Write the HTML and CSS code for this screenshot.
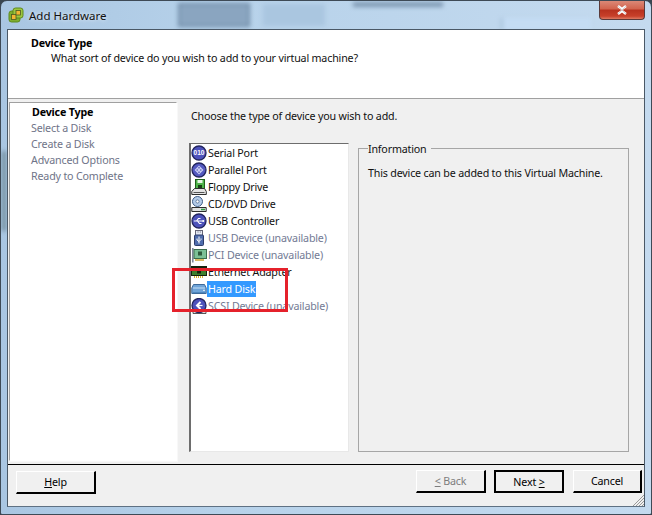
FILE: index.html
```html
<!DOCTYPE html>
<html lang="en">
<head>
<meta charset="utf-8">
<title>Add Hardware</title>
<link rel="stylesheet" href="styles.css">
</head>
<body>
<div class="window">
  <div class="backdrop">
    <span class="blur blur-a"></span>
    <span class="blur blur-b"></span>
    <span class="blur blur-c"></span>
    <span class="blur blur-d"></span>
    <span class="blur blur-e"></span>
  </div>
  <header class="titlebar">
    <svg class="app-icon" viewBox="0 0 16 16" aria-hidden="true">
      <rect x="1" y="4" width="11" height="11" rx="2.5" fill="#7fae2e" stroke="#5d8a1e"/>
      <rect x="5" y="1" width="10" height="10" rx="2.5" fill="#9cc63f" stroke="#5d8a1e"/>
      <rect x="3.5" y="7.5" width="4.5" height="5" fill="#f2b632" stroke="#4b5a22" stroke-width=".8"/>
      <rect x="8" y="3.5" width="4.5" height="4.5" fill="#f2b632" stroke="#4b5a22" stroke-width=".8"/>
    </svg>
    <span class="title">Add Hardware</span>
    <button class="close" aria-label="Close">
      <svg viewBox="0 0 12 10" aria-hidden="true"><path d="M2 1l4 3 4-3M2 9l4-3 4 3" fill="none" stroke="#fff" stroke-width="2.4"/><path d="M2 1l8 8M10 1L2 9" fill="none" stroke="#4b5564" stroke-width=".5" opacity=".5"/></svg>
    </button>
  </header>
  <div class="client">
    <section class="banner">
      <h1>Device Type</h1>
      <p>What sort of device do you wish to add to your virtual machine?</p>
    </section>
    <main class="main">
      <ol class="steps">
        <li class="current">Device Type</li>
        <li>Select a Disk</li>
        <li>Create a Disk</li>
        <li>Advanced Options</li>
        <li>Ready to Complete</li>
      </ol>
      <div class="content">
        <p class="prompt">Choose the type of device you wish to add.</p>
        <div class="columns">
          <ul class="devices">
            <li><svg class="ico" viewBox="0 0 16 16"><circle cx="8" cy="8" r="7" fill="#4d52bb" stroke="#23255f" stroke-width="1.3"/><text class="ico-digits" x="8" y="10.4" text-anchor="middle">010</text></svg><span>Serial Port</span></li>
            <li><svg class="ico" viewBox="0 0 16 16"><circle cx="8" cy="8" r="7" fill="#5358bf" stroke="#23255f" stroke-width="1.3"/><path d="M8 3.5L12.5 8 8 12.5 3.5 8z" fill="#c9ccf4"/><path d="M8 5v1.5M5.5 8H7M9 8h1.5M8 9.5V11" stroke="#4348a8" stroke-width="1.2"/></svg><span>Parallel Port</span></li>
            <li><svg class="ico" viewBox="0 0 16 16"><rect x="4.5" y=".5" width="9" height="9" fill="#4fb34a" stroke="#1f5f1a"/><rect x="6.5" y="1" width="5" height="3" fill="#e8f5e6"/><rect x="7" y="6" width="4" height="3.5" fill="#173f14"/><path d="M.8 15.5v-3l2.7-3h10l1.8 3v3z" fill="#e4e4e4" stroke="#2e2e2e"/><path d="M2.5 13.5h11" stroke="#555"/></svg><span>Floppy Drive</span></li>
            <li><svg class="ico" viewBox="0 0 16 16"><circle cx="6.5" cy="5.5" r="5" fill="#b4cbe8" stroke="#3f5c86"/><circle cx="6.5" cy="5.5" r="1.6" fill="#fff" stroke="#3f5c86" stroke-width=".7"/><path d="M.8 15.5v-4h14.4v4z" fill="#e2e2e2" stroke="#2e2e2e"/><path d="M10 13.5h4" stroke="#2f9e44" stroke-width="1.3"/></svg><span>CD/DVD Drive</span></li>
            <li><svg class="ico" viewBox="0 0 16 16"><circle cx="8" cy="8" r="7" fill="#4d52bb" stroke="#23255f" stroke-width="1.3"/><path d="M2.8 8h9.5M5.5 8l2-2.5h2M6.5 8l2 2.5h2" fill="none" stroke="#fff" stroke-width="1.2"/><circle cx="12.3" cy="8" r="1" fill="#fff"/></svg><span>USB Controller</span></li>
            <li class="off"><svg class="ico" viewBox="0 0 16 16"><rect x="4.5" y=".5" width="7" height="5" fill="#e6eaf4" stroke="#667"/><path d="M6.5 2h1M8.8 2h1" stroke="#667"/><rect x="3.5" y="5" width="9" height="10.5" rx="1" fill="#4f6cac" stroke="#2e3c6a"/><path d="M8 6.5v7M6 8.5v1.5l2 1.5 2-2V8.5" fill="none" stroke="#fff"/></svg><span>USB Device (unavailable)</span></li>
            <li class="off"><svg class="ico" viewBox="0 0 16 16"><path d="M1.8 1v14.5" stroke="#778094" stroke-width="1.5"/><rect x="3" y="2.5" width="12.5" height="9" fill="#7cc096" stroke="#3c6d4c"/><rect x="7" y="4.5" width="4" height="4" fill="#2f5a3c"/><path d="M4 13h9" stroke="#d2a83a" stroke-width="1.6"/></svg><span>PCI Device (unavailable)</span></li>
            <li><svg class="ico" viewBox="0 0 16 16"><rect x=".5" y="2.5" width="15" height="9" fill="#3d7f2d" stroke="#14230e"/><rect x="1" y="3" width="14" height="2" fill="#14230e"/><rect x="6" y="6" width="4" height="3.5" fill="#14230e"/><path d="M3 13h10" stroke="#d8b32c" stroke-width="2" stroke-dasharray="1 1"/></svg><span>Ethernet Adapter</span></li>
            <li class="selected"><svg class="ico" viewBox="0 0 16 16"><path d="M2.5 3.5h11l1.7 3.5v5.5H.8V7z" fill="#6fa4d8" stroke="#3d6a9a"/><path d="M2 7h12" stroke="#c8e0f6"/><path d="M1.5 11.5h13" stroke="#4f86bc"/><path d="M12 9.3h2" stroke="#eaf4fc"/></svg><span>Hard Disk</span></li>
            <li class="off"><svg class="ico" viewBox="0 0 16 16"><path d="M2 13.5h13v2H2z" fill="#d9d9d9" stroke="#333" stroke-width=".8"/><circle cx="8" cy="7.5" r="7" fill="#4d52bb" stroke="#23255f" stroke-width="1.3"/><path d="M9.5 4L6 7.5 9.5 11" fill="none" stroke="#fff" stroke-width="2"/><path d="M6.5 7.5h5" stroke="#fff" stroke-width="1.2"/></svg><span>SCSI Device (unavailable)</span></li>
          </ul>
          <fieldset class="info">
            <legend>Information</legend>
            <p>This device can be added to this Virtual Machine.</p>
          </fieldset>
        </div>
      </div>
    </main>
    <footer class="footer">
      <button class="btn help"><u>H</u>elp</button>
      <div class="nav">
        <button class="btn back" disabled><u>&lt;</u> Back</button>
        <button class="btn next">Next <u>&gt;</u></button>
        <button class="btn cancel">Cancel</button>
      </div>
      <svg class="grip" viewBox="0 0 12 12" aria-hidden="true"><path d="M12 1L1 12M12 4L4 12M12 7L7 12M12 10l-2 2" stroke="#9a9a9a" fill="none"/></svg>
    </footer>
  </div>
  <div class="annotation"></div>
</div>
</body>
</html>
```
FILE: styles.css
```css
* { box-sizing: border-box; }
html, body { margin: 0; padding: 0; }
body {
  width: 652px;
  height: 515px;
  overflow: hidden;
  background: #3a4650;
  font-family: "Noto Sans", sans-serif;
  font-size: 10.7px;
  letter-spacing: -0.18px;
  color: #111;
}
.window {
  position: relative;
  width: 652px;
  height: 515px;
  padding: 0 6px 7px 6px;
  display: flex;
  flex-direction: column;
  border: 1px solid #3e4a56;
  border-radius: 7px 7px 2px 2px;
  background: linear-gradient(90deg, #a9c6e2 0, #b7d2ea 35%, #c4daef 100%);
  overflow: hidden;
}
.backdrop { position: absolute; inset: 0; pointer-events: none; }
.blur { position: absolute; display: block; filter: blur(2px); }
.blur-a { left: 177px; top: 2px; width: 72px; height: 24px; background: #8aa5c0; border: 2px solid #708ba6; }
.blur-b { left: 262px; top: 3px; width: 62px; height: 22px; background: #aac6e0; }
.blur-c { left: 352px; top: 1px; width: 90px; height: 5px; background: #7f99b3; }
.blur-d { left: 500px; top: 17px; width: 90px; height: 12px; background: #c4dcf3; border-left: 2px solid #a3bdd6; }
.blur-e { left: 1px; top: 150px; width: 4px; height: 80px; background: #6f8a98; }
.titlebar {
  position: relative;
  flex: 0 0 28px;
  display: flex;
  align-items: center;
  gap: 5px;
  padding: 0 0 0 1px;
}
.app-icon { width: 16px; height: 16px; }
.title { font-size: 11.5px; letter-spacing: 0; color: #111; text-shadow: 0 0 4px rgba(255,255,255,.8); }
.close {
  margin-left: auto;
  align-self: flex-start;
  width: 46px;
  height: 20px;
  margin-top: -1px;
  padding: 0;
  border: 1px solid #5a3a3a;
  border-top: 0;
  border-radius: 0 0 4px 4px;
  background: linear-gradient(#dc8d7c 0, #d2654f 45%, #b8321f 55%, #c8402a 85%, #de7a62 100%);
  display: flex;
  align-items: center;
  justify-content: center;
}
.close svg { width: 12px; height: 10px; }
.client {
  position: relative;
  flex: 1;
  display: flex;
  flex-direction: column;
  border: 1px solid #4a5866;
  border-bottom-color: #5f7183;
  background: #f0f0f0;
}
.banner {
  flex: 0 0 69px;
  background: #fff;
  border-bottom: 1px solid #a0a0a0;
  padding: 6px 0 0 23px;
}
.banner h1 { margin: 0; font-size: inherit; font-weight: 700; line-height: 15px; color: #000; }
.banner p { margin: 0; padding-left: 20px; line-height: 15px; color: #111; }
.main { flex: 1; display: flex; min-height: 0; padding: 3px 0 3px 1px; border-bottom: 1px solid #000; }
.steps {
  flex: 0 0 168px;
  list-style: none;
  margin: 0;
  padding: 1px 0 0 21px;
  background: #fff;
  border: 1px solid;
  border-color: #a0a0a0 #fff #fff #a0a0a0;
  box-shadow: 1px 1px 0 #f8f8f8;
  color: #6f7488;
}
.steps li { height: 16px; line-height: 16px; }
.steps .current { color: #000; font-weight: 700; padding-left: 1px; }
.content { flex: 1; display: flex; flex-direction: column; padding: 0 15px 9px 12px; }
.prompt { margin: 6px 0 0 2px; line-height: 16px; height: 34px; }
.columns { flex: 1; display: flex; gap: 9px; min-height: 0; }
.devices {
  flex: 0 0 160px;
  list-style: none;
  margin: 1px 0 0;
  padding: 0;
  background: #fff;
  border: 1px solid;
  border-color: #6d6d6d #e8e8e8 #e8e8e8 #6d6d6d;
  border-left-width: 2px;
}
.devices li { height: 17px; display: flex; align-items: center; gap: 0; white-space: nowrap; }
.devices span { padding: 0 1px; line-height: 16px; }
.devices .off { color: #727a94; }
.devices .selected span { background: #3399ff; color: #fff; }
.ico { flex: none; width: 16px; height: 16px; }
.ico-digits { font-family: "Liberation Sans", sans-serif; font-size: 6.5px; font-weight: 700; letter-spacing: 0; fill: #fff; }
.info {
  flex: 1;
  margin: 0;
  padding: 0 9px;
  border: 1px solid #a6a6a6;
  min-width: 0;
}
.info legend { padding: 0 5px 0 0; margin-left: 0; height: 13px; line-height: 15px; }
.info p { margin: 10px 0 0; line-height: 16px; color: #111; }
.footer {
  position: relative;
  flex: 0 0 41px;
  display: flex;
  justify-content: space-between;
  padding: 5px 2px 0 8px;
}
.nav { display: flex; gap: 8px; }
.btn {
  height: 23px;
  padding: 0;
  font: inherit;
  letter-spacing: inherit;
  color: #000;
  background: #f0f0f0;
  border: 1px solid;
  border-color: #fff #000 #000 #fff;
  border-width: 1px 2px 2px 1px;
}
.help { width: 80px; margin-top: 1px; }
.back { width: 70px; color: #7d7d7d; }
.next { width: 70px; border: 2px solid #000; margin-right: 1px; }
.cancel { width: 69px; }
.grip { position: absolute; right: 0; bottom: 0; width: 12px; height: 12px; }
.annotation {
  position: absolute;
  left: 171px;
  top: 267px;
  width: 116px;
  height: 44px;
  border: 3px solid #e5212b;
}
```
